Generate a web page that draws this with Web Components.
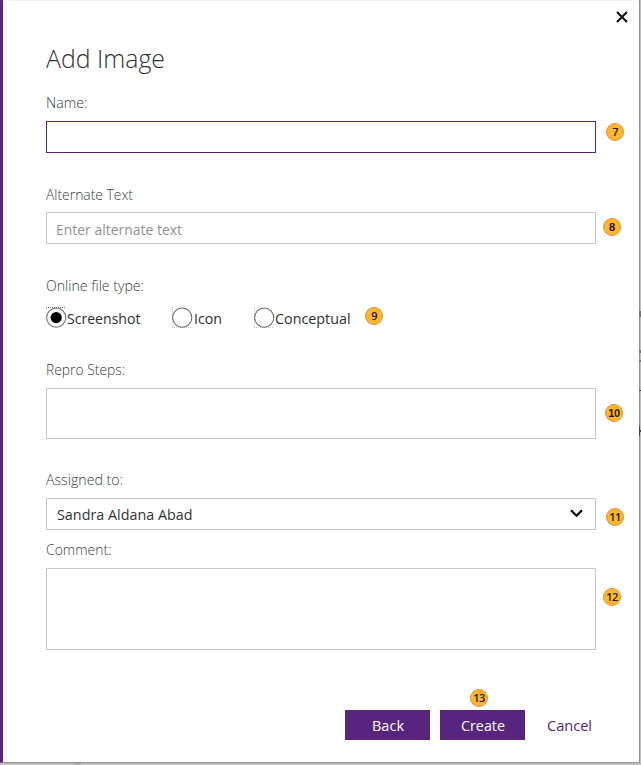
<!DOCTYPE html>
<html lang="en">
<head>
<meta charset="utf-8">
<title>Add Image</title>
<style>
html,body{margin:0;height:100%;overflow:hidden;background:#bfbfbf;font-family:"Open Sans","Noto Sans",sans-serif}
</style>
</head>
<body>
<image-dialog></image-dialog>
<script>
const define=(name,html,init)=>customElements.define(name,class extends HTMLElement{
  constructor(){super();this.attachShadow({mode:"open"}).innerHTML=html}
  connectedCallback(){if(init)init.call(this,this.shadowRoot)}
});

/* Text condensed or expanded horizontally to a given width. */
define("fit-text",`<style>
:host{display:block;height:20px;line-height:18px;font-size:15px;white-space:nowrap}
span{display:inline-block;transform-origin:0 50%}
</style><span><slot></slot></span>`,function(r){
  const s=r.querySelector("span"),w=+this.getAttribute("w");
  this.style.width=w+"px";
  s.style.transform="scaleX("+w/s.getBoundingClientRect().width+")";
});

define("number-badge",`<style>
:host{position:absolute;box-sizing:border-box;width:18px;height:18px;border-radius:50%;border:1px solid #f08a3c;background:#fdb827;color:#1c1400;font:600 11px/16px "Open Sans","Noto Sans",sans-serif;text-align:center;letter-spacing:-.6px}
:host([arial]){font:bold 11px/16px "Liberation Sans",Arial,sans-serif;letter-spacing:-.3px}
</style><slot></slot>`,function(){
  this.style.left=this.getAttribute("cx")-9+"px";this.style.top=this.getAttribute("cy")-9+"px";
});

define("field-box",`<style>
:host{display:flex;box-sizing:border-box;width:550px;height:32px;border:1px solid #c8c8c8;align-items:center;justify-content:space-between;padding:3px 12px 0 10px;color:#333}
:host([active]){border-color:#57257d}
:host([placeholder]){color:#929292;padding-left:9px}
</style><slot></slot>`);

define("radio-option",`<style>
:host{display:flex;height:22px;color:#303030}
svg{display:block;width:22px;height:22px;flex:none}
.dot{display:none}
:host([checked]) .dot{display:block}
:host([checked]) .side,:host(:not([checked])) .top{display:none}
::slotted(*){margin-top:2px}
</style><svg viewBox="0 0 22 22" fill="none"><path class="top" d="M0 .5H20" stroke="#777" stroke-dasharray="1 1"/><path class="side" d="M.5 0V21M0 20.5H20" stroke="#c4c4c4" stroke-dasharray="1 1"/><circle cx="10.2" cy="10.6" r="9.6" stroke="#6e6e6e" stroke-width="1.1"/><circle class="dot" cx="10.2" cy="10.6" r="5.6" fill="#000"/></svg><slot></slot>`);

define("action-button",`<style>
:host{display:flex;box-sizing:border-box;width:85px;height:30px;justify-content:center;padding:6px 0 0 1px;background:#57257d;color:#fff}
:host([link]){background:none;color:#57257d}
</style><slot></slot>`);

define("image-dialog",`<style>
:host{position:relative;display:block;box-sizing:border-box;width:641px;height:765px;padding:0 1px 2px 0}
main{box-sizing:border-box;height:763px;width:640px;background:#fff;border:solid #929292;border-width:0 1px 1px 0;border-left:3px solid #57257d;padding:0 43px;display:flow-root;box-shadow:inset 0 1px #f4f4f4}
header{display:flex;justify-content:flex-end;margin-right:-32px;padding-top:11px;height:12px}
.title{height:34px;line-height:34px;font-size:25px;font-weight:300;color:#333;margin-top:18px}
.l{font-weight:300;color:#3c3c3c}
.radios{display:flex;margin-top:11px}
footer{display:flex;gap:10px;margin:60px 0 0 299px;width:275px}
svg{display:block}
.edge{position:absolute}
</style>
<main>
<header><svg width="12" height="12" viewBox="0 0 12 12"><path d="M1 1L11 11M11 1L1 11" stroke="#111" stroke-width="2.1"/></svg></header>
<fit-text class="title" w="119">Add Image</fit-text>
<fit-text class="l" w="41.5" style="margin-top:18px">Name:</fit-text>
<field-box active style="margin-top:8px"></field-box>
<fit-text class="l" w="87" style="margin-top:32px">Alternate Text</fit-text>
<field-box placeholder style="margin-top:7px"><fit-text w="126">Enter alternate text</fit-text></field-box>
<fit-text class="l" w="98" style="margin-top:32px">Online file type:</fit-text>
<div class="radios">
<radio-option checked style="width:126px"><fit-text w="73.5" style="margin-left:-1px">Screenshot</fit-text></radio-option>
<radio-option style="width:82px"><fit-text w="28">Icon</fit-text></radio-option>
<radio-option><fit-text w="75.5" style="margin-left:-1px">Conceptual</fit-text></radio-option>
</div>
<fit-text class="l" w="79" style="margin-top:31px">Repro Steps:</fit-text>
<field-box style="margin-top:8px;height:51px"></field-box>
<fit-text class="l" w="77" style="margin-top:31px">Assigned to:</fit-text>
<field-box style="margin-top:8px"><fit-text w="135.5" style="margin-top:-2px">Sandra Aldana Abad</fit-text><svg style="margin-top:-4px" width="13" height="9" viewBox="0 0 13 9"><path d="M1 1.2L6.5 6.8L12 1.2" fill="none" stroke="#000" stroke-width="2.2"/></svg></field-box>
<fit-text class="l" w="65.5" style="margin-top:10px">Comment:</fit-text>
<field-box style="margin-top:8px;height:82px"></field-box>
<footer><action-button><fit-text w="32">Back</fit-text></action-button><action-button><fit-text w="44">Create</fit-text></action-button><action-button link style="margin-left:-9px"><fit-text w="45">Cancel</fit-text></action-button></footer>
</main>
<number-badge cx="615" cy="132">7</number-badge>
<number-badge arial cx="612" cy="227">8</number-badge>
<number-badge cx="374" cy="316">9</number-badge>
<number-badge arial cx="614" cy="413">10</number-badge>
<number-badge cx="615" cy="517">11</number-badge>
<number-badge cx="612" cy="597">12</number-badge>
<number-badge cx="479" cy="698">13</number-badge>
<svg class="edge" style="left:639px;top:300px" width="2" height="145"><path d="M0 11h2v6H0zM0 50h2v3H0zM0 60h2v2H0z" fill="#777"/><path d="M0 90h2v1H0zM0 126h1v10H0zM0 130h2v2H0z" fill="#444"/></svg>
<svg class="edge" style="left:74px;top:763px" width="7" height="2"><path d="M0 0h7v2H0z" fill="#aaa"/></svg>`);
</script>
</body>
</html>
